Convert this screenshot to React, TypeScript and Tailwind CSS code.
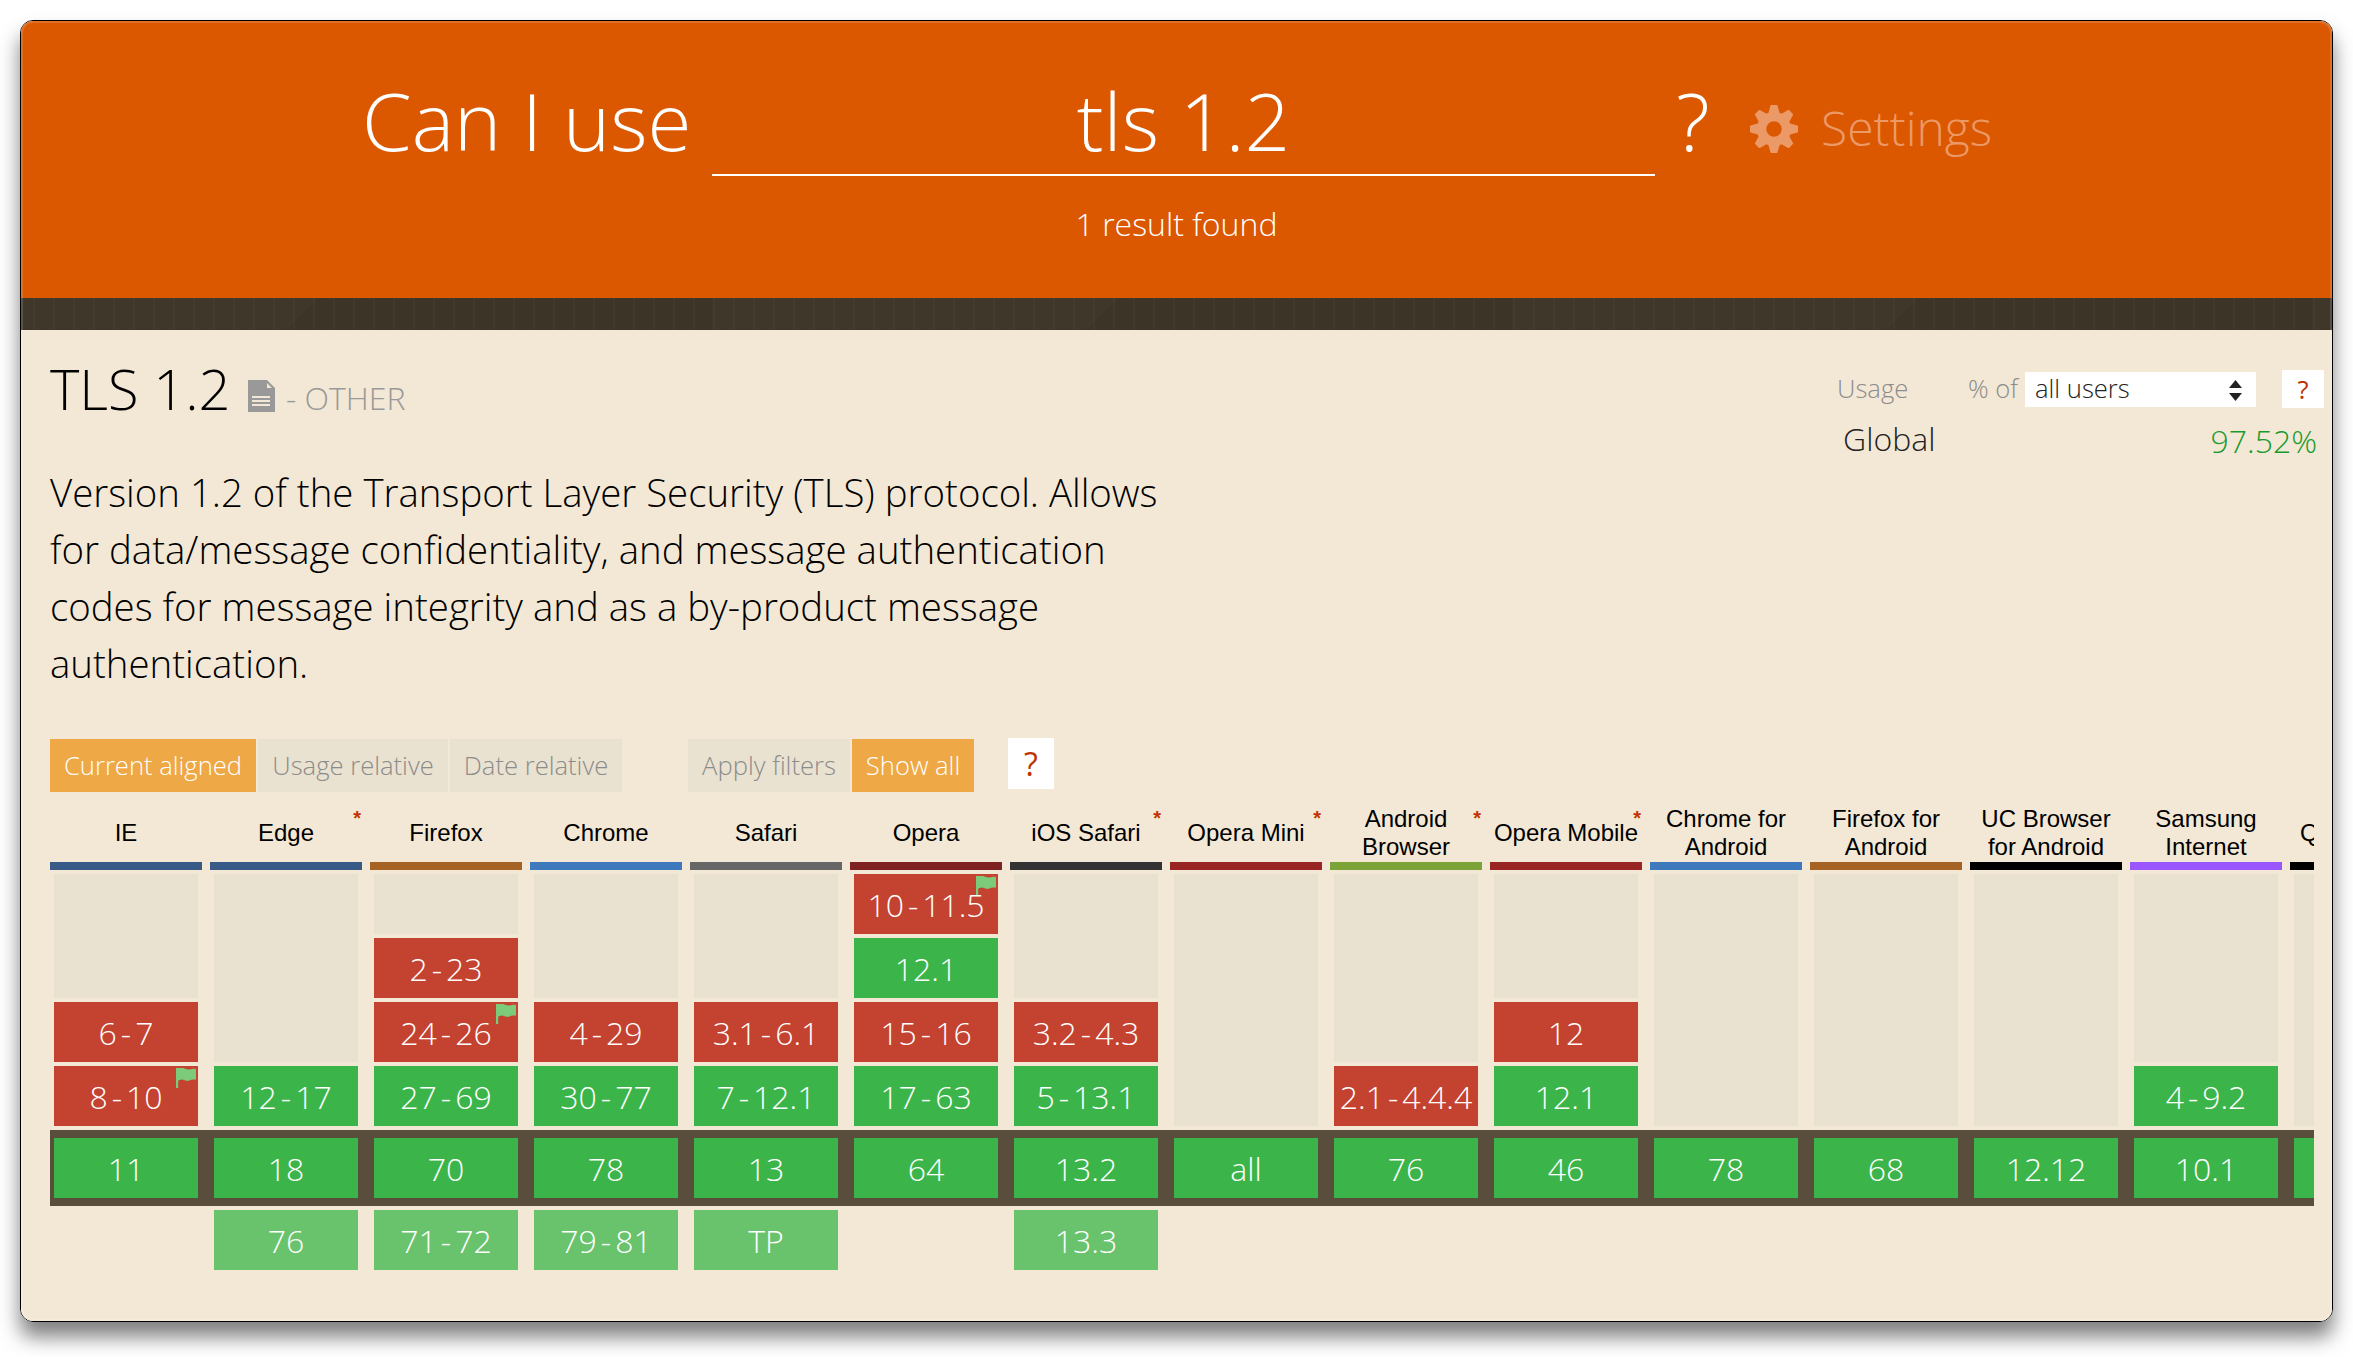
import React from "react";

type Kind = "n" | "y" | "f" | "c";
type Cell = { v: string; k: Kind; flag?: boolean };
type Browser = {
  name: string;
  bar: string;
  note?: boolean;
  past: Cell[];
  current: string;
  future?: string;
};

const n = (v: string, flag = false): Cell => ({ v, k: "n", flag });
const y = (v: string): Cell => ({ v, k: "y" });

const browsers: Browser[] = [
  { name: "IE", bar: "bg-[#375a87]", past: [n("6-7"), n("8-10", true)], current: "11" },
  { name: "Edge", bar: "bg-[#375a87]", note: true, past: [y("12-17")], current: "18", future: "76" },
  { name: "Firefox", bar: "bg-[#a66324]", past: [n("2-23"), n("24-26", true), y("27-69")], current: "70", future: "71-72" },
  { name: "Chrome", bar: "bg-[#3f79bd]", past: [n("4-29"), y("30-77")], current: "78", future: "79-81" },
  { name: "Safari", bar: "bg-[#666666]", past: [n("3.1-6.1"), y("7-12.1")], current: "13", future: "TP" },
  { name: "Opera", bar: "bg-[#7f2222]", past: [n("10-11.5", true), y("12.1"), n("15-16"), y("17-63")], current: "64" },
  { name: "iOS Safari", bar: "bg-[#333333]", note: true, past: [n("3.2-4.3"), y("5-13.1")], current: "13.2", future: "13.3" },
  { name: "Opera Mini", bar: "bg-[#992424]", note: true, past: [], current: "all" },
  { name: "Android Browser", bar: "bg-[#7ca338]", note: true, past: [n("2.1-4.4.4")], current: "76" },
  { name: "Opera Mobile", bar: "bg-[#992424]", note: true, past: [n("12"), y("12.1")], current: "46" },
  { name: "Chrome for Android", bar: "bg-[#3f79bd]", past: [], current: "78" },
  { name: "Firefox for Android", bar: "bg-[#a66324]", past: [], current: "68" },
  { name: "UC Browser for Android", bar: "bg-black", past: [], current: "12.12" },
  { name: "Samsung Internet", bar: "bg-[#9b57ff]", past: [y("4-9.2")], current: "10.1" },
  { name: "QQ Browser", bar: "bg-black", past: [], current: "1.2" },
];

const fills: Record<Kind, string> = {
  n: "bg-[#c44230]",
  y: "bg-[#3bb54a]",
  c: "bg-[#3bb54a]",
  f: "bg-[#69c36d]",
};

function Flag() {
  return (
    <svg className="absolute right-0.5 top-0.5 h-5 w-5" viewBox="0 0 20 20" fill="#7ccb7b">
      <path d="M0 0h6.500c2 0 3.500 1.500 6 1.500S17 .2 20 1v10.800c-3-.5-4.500 0-6.500.7-3.500 1.300-5-1.300-8-1-1.500.1-2.500.6-3.300 1.200V20H0z" />
    </svg>
  );
}

function Version({ v, k, flag }: Cell) {
  const parts = v.split("-");
  return (
    <div className={`relative flex h-[60px] shrink-0 items-center justify-center pt-px text-[32px] leading-none text-white ${fills[k]}`}>
      {flag && <Flag />}
      <span className="relative whitespace-nowrap">
        {parts[0]}
        {parts.length > 1 && <span className="mx-1">-</span>}
        {parts[1]}
      </span>
    </div>
  );
}

function Column({ b }: { b: Browser }) {
  return (
    <div className="w-[152px] shrink-0">
      <div className="relative flex h-[58px] items-center justify-center text-center font-['Liberation_Sans',sans-serif] text-[24px] leading-7 font-normal text-black">
        <span className={b.name.startsWith("QQ") || b.name === "Opera Mobile" ? "whitespace-nowrap" : ""}>{b.name}</span>
        {b.note && <span className="absolute top-0.5 right-px text-[20px] leading-6 font-bold text-[#c33300]">*</span>}
      </div>
      <div className={`h-2 ${b.bar}`} />
      <div className="flex h-[260px] flex-col gap-1 px-1 py-1">
        {b.past.length < 4 && <div className="flex-1 bg-[#eae2d0]" />}
        {b.past.map((c) => (
          <Version key={c.v} {...c} />
        ))}
      </div>
      <div className="px-1 py-2">
        <Version v={b.current} k="c" />
      </div>
      {b.future && (
        <div className="px-1 pt-1">
          <Version v={b.future} k="f" />
        </div>
      )}
    </div>
  );
}

function Tab({ children, on, w }: { children: React.ReactNode; on?: boolean; w: string }) {
  return (
    <button className={`flex h-[53px] items-center justify-center pt-0.5 text-[25.6px] font-light ${w} ${on ? "bg-[#eea845] text-white" : "bg-[#eae2d0] text-[#8c8c8c]"}`}>
      {children}
    </button>
  );
}

const teeth = [0, 45, 90, 135, 180, 225, 270, 315];

function Gear() {
  return (
    <svg className="h-12 w-12" viewBox="0 0 48 48" fill="#eb9966">
      <path fillRule="evenodd" d="M24 7a17 17 0 100 34 17 17 0 000-34zM24 16.300a7.700 7.700 0 110 15.400 7.700 7.700 0 010-15.400z" />
      {teeth.map((a) => (
        <path key={a} transform={`rotate(${a} 24 24)`} d="M21.300 0h5.400l.8.600 2 7.200 1.700 2.200H16.800l1.700-2.200 2-7.200z" />
      ))}
    </svg>
  );
}

export default function App() {
  return (
    <div className="h-[1357px] w-[2353px] overflow-hidden bg-white pt-5 pl-5 font-['Open_Sans',sans-serif] font-light">
      <div className="relative h-[1302px] w-[2313px] overflow-visible rounded-[13px] border border-black shadow-[0_15px_20px_rgba(0,0,0,0.5)]">
        <div className="flex h-full flex-col overflow-hidden rounded-xl bg-[#f3e8d5]">
          <header className="h-[277px] shrink-0 bg-[#db5700] text-white">
            <div className="flex h-[155px] pl-[341px]">
              <div className="flex w-[350px] pt-11 text-[80px] leading-[109px] whitespace-nowrap">Can I use</div>
              <div className="w-[943px] border-b-2 border-white pt-11 text-center text-[80px] leading-[109px]">tls 1.2</div>
              <div className="w-[95px] pt-11 pl-[21px] text-[80px] leading-[109px]">?</div>
              <div className="pt-[84px]">
                <Gear />
              </div>
              <div className="pt-[74px] pl-[23px] text-[48px] leading-[66px] text-[#eb9966]">Settings</div>
            </div>
            <p className="pt-[26px] text-center text-[32px] leading-[44px]">1 result found</p>
          </header>
          <div className="h-8 shrink-0 bg-[repeating-linear-gradient(90deg,transparent_0,transparent_12px,rgba(255,255,255,0.025)_12px,rgba(255,255,255,0.025)_14px,transparent_14px,transparent_20px),linear-gradient(135deg,#3f3729_48.8%,#3c3426_48.9%)] bg-[length:100%_100%,800px_32px] bg-[position:0_0,-109px_0]" />

          <main className="pl-[29px]">
            <div className="flex h-[121px] justify-between">
              <div className="flex pt-5">
                <h1 className="w-[198px] text-[56px] leading-[76px]">TLS 1.2</h1>
                <svg className="mt-[30px] h-8 w-[27px]" viewBox="0 0 27 32" fill="#999">
                  <path fillRule="evenodd" d="M0 0h19l8 8v24H0zM19 3v5h5zM4 16v2h18v-2zm0 4v2h18v-2zm0 4v2h18v-2z" />
                </svg>
                <span className="pt-[26px] pl-[11px] text-[32px] leading-[44px] text-[#999]">- OTHER</span>
              </div>
              <div className="w-[495px] pt-10">
                <div className="flex h-[38px] items-center text-[25.6px] text-[#8c8c8c]">
                  <span className="w-[131px] pt-px">Usage</span>
                  <span className="w-[57px] pt-px">% of</span>
                  <div className="flex h-[35px] w-[231px] items-center justify-between bg-white pt-px pr-[14px] pl-[10px] text-[#222]">
                    all users
                    <svg className="mt-0.5 h-[21px] w-[13px]" viewBox="0 0 13 21" fill="#222">
                      <path d="M6.500 0L13 8H0zM6.500 21L0 13h13z" />
                    </svg>
                  </div>
                  <button className="ml-[26px] h-[38px] w-[42px] bg-white pt-px font-normal text-[#b30]">?</button>
                </div>
                <div className="flex justify-between pt-[9px] pr-[15px] pl-1.5 text-[32px] leading-[44px]">
                  <span className="text-[#222]">Global</span>
                  <span className="pt-0.5 text-[#1a9a2e]">97.52%</span>
                </div>
              </div>
            </div>
            <p className="mt-[13px] w-[1160px] text-[38.4px] leading-[57px]">
              Version 1.2 of the Transport Layer Security (TLS) protocol. Allows
              <br />
              for data/message confidentiality, and message authentication
              <br />
              codes for message integrity and as a by-product message
              <br />
              authentication.
            </p>
            <div className="mt-[47px] flex gap-0.5">
              <Tab on w="w-[206px]">Current aligned</Tab>
              <Tab w="w-[190px]">Usage relative</Tab>
              <Tab w="w-[172px] mr-[64px]">Date relative</Tab>
              <Tab w="w-[162px]">Apply filters</Tab>
              <Tab on w="w-[122px]">Show all</Tab>
              <button className="-mt-px ml-8 h-[51px] w-[46px] bg-white text-[32px] font-normal text-[#b30]">?</button>
            </div>
            <div className="mt-3 w-[2264px] overflow-hidden">
              <div className="flex gap-2 bg-[linear-gradient(#594d3b,#594d3b)] bg-[length:100%_76px] bg-[position:0_326px] bg-no-repeat">
                {browsers.map((b) => (
                  <Column key={b.name} b={b} />
                ))}
              </div>
            </div>
          </main>
        </div>
        <div className="pointer-events-none absolute inset-0 rounded-xl shadow-[inset_0_0_0_2px_rgba(255,255,255,0.15)]" />
      </div>
    </div>
  );
}
